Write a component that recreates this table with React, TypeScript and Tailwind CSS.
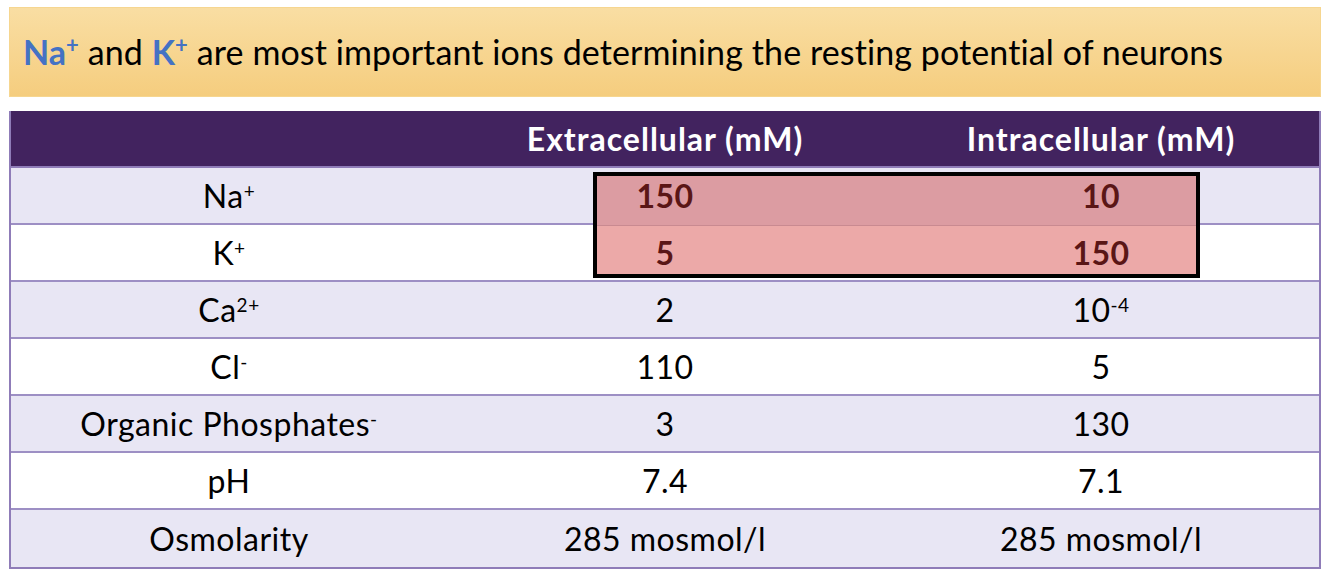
const ROWS = [
  { label: "Na", sup: "+", ext: "150", int: "10", hi: true },
  { label: "K", sup: "+", ext: "5", int: "150", hi: true },
  { label: "Ca", sup: "2+", ext: "2", int: "10", intSup: "-4" },
  { label: "Cl", sup: "-", ext: "110", int: "5" },
  { label: "Organic Phosphates", sup: "-", ext: "3", int: "130" },
  { label: "pH", ext: "7.4", int: "7.1" },
  { label: "Osmolarity", ext: "285 mosmol/l", int: "285 mosmol/l" },
];

function Cell({ text, sup, hi }: { text: string; sup?: string; hi?: boolean }) {
  return (
    <div className="flex items-center justify-center">
      <span className={`relative z-10 ${hi ? "font-bold text-[#5a1616]" : "text-black"}`}>
        {text}
        {sup && <span className="relative -top-[10px] text-[19px]">{sup}</span>}
      </span>
    </div>
  );
}

export default function App() {
  return (
    <div className="w-[1334px] h-[576px] bg-white pt-[7px] px-[9px] font-['Lato',sans-serif]">
      {/* Title banner */}
      <div className="h-[90px] w-[1312px] flex items-center pl-[13px] pb-[2px] border border-[#f6d690] bg-gradient-to-b from-[#f9dea3] to-[#f5cd7e] text-[34px] text-black">
        <span className="font-bold text-[#4472c4]">
          Na<span className="relative -top-[12px] text-[22px]">+</span>
        </span>
        <span className="ml-[9px]">and</span>
        <span className="ml-[9px] font-bold text-[#4472c4]">
          K<span className="relative -top-[12px] text-[22px]">+</span>
        </span>
        <span className="ml-[9px] tracking-[0.1px]">are most important ions determining the resting potential of neurons</span>
      </div>

      {/* Table */}
      <div className="relative mt-[14px] w-[1312px] border-l-2 border-r-2 border-b-2 border-[#8f7cb8] text-[32px] tracking-[0.5px]">
        <div className="grid grid-cols-3 h-[57px] bg-[#42235f] text-white font-bold text-[32px] tracking-[1px] border-b-2 border-[#8f7cb8]">
          <div />
          <div className="flex items-center justify-center">Extracellular (mM)</div>
          <div className="flex items-center justify-center">Intracellular (mM)</div>
        </div>
        {ROWS.map((r, i) => (
          <div
            key={i}
            className={`grid grid-cols-3 h-[57px] ${i % 2 === 0 ? "bg-[#e8e6f4]" : "bg-white"} ${i < ROWS.length - 1 ? "border-b-2 border-[#9d8fc4]" : ""}`}
          >
            <Cell text={r.label} sup={r.sup} />
            <Cell text={r.ext} hi={r.hi} />
            <Cell text={r.int} sup={r.intSup} hi={r.hi} />
          </div>
        ))}

        {/* Highlight box over Na+ and K+ values */}
        <div className="absolute left-[582px] top-[61px] w-[607px] h-[106px] border-[4px] border-black flex flex-col">
          <div className="flex-1 bg-[#dc9ca2] border-b border-[#c98a91]" />
          <div className="flex-1 bg-[#eca9a8]" />
        </div>
      </div>
    </div>
  );
}
